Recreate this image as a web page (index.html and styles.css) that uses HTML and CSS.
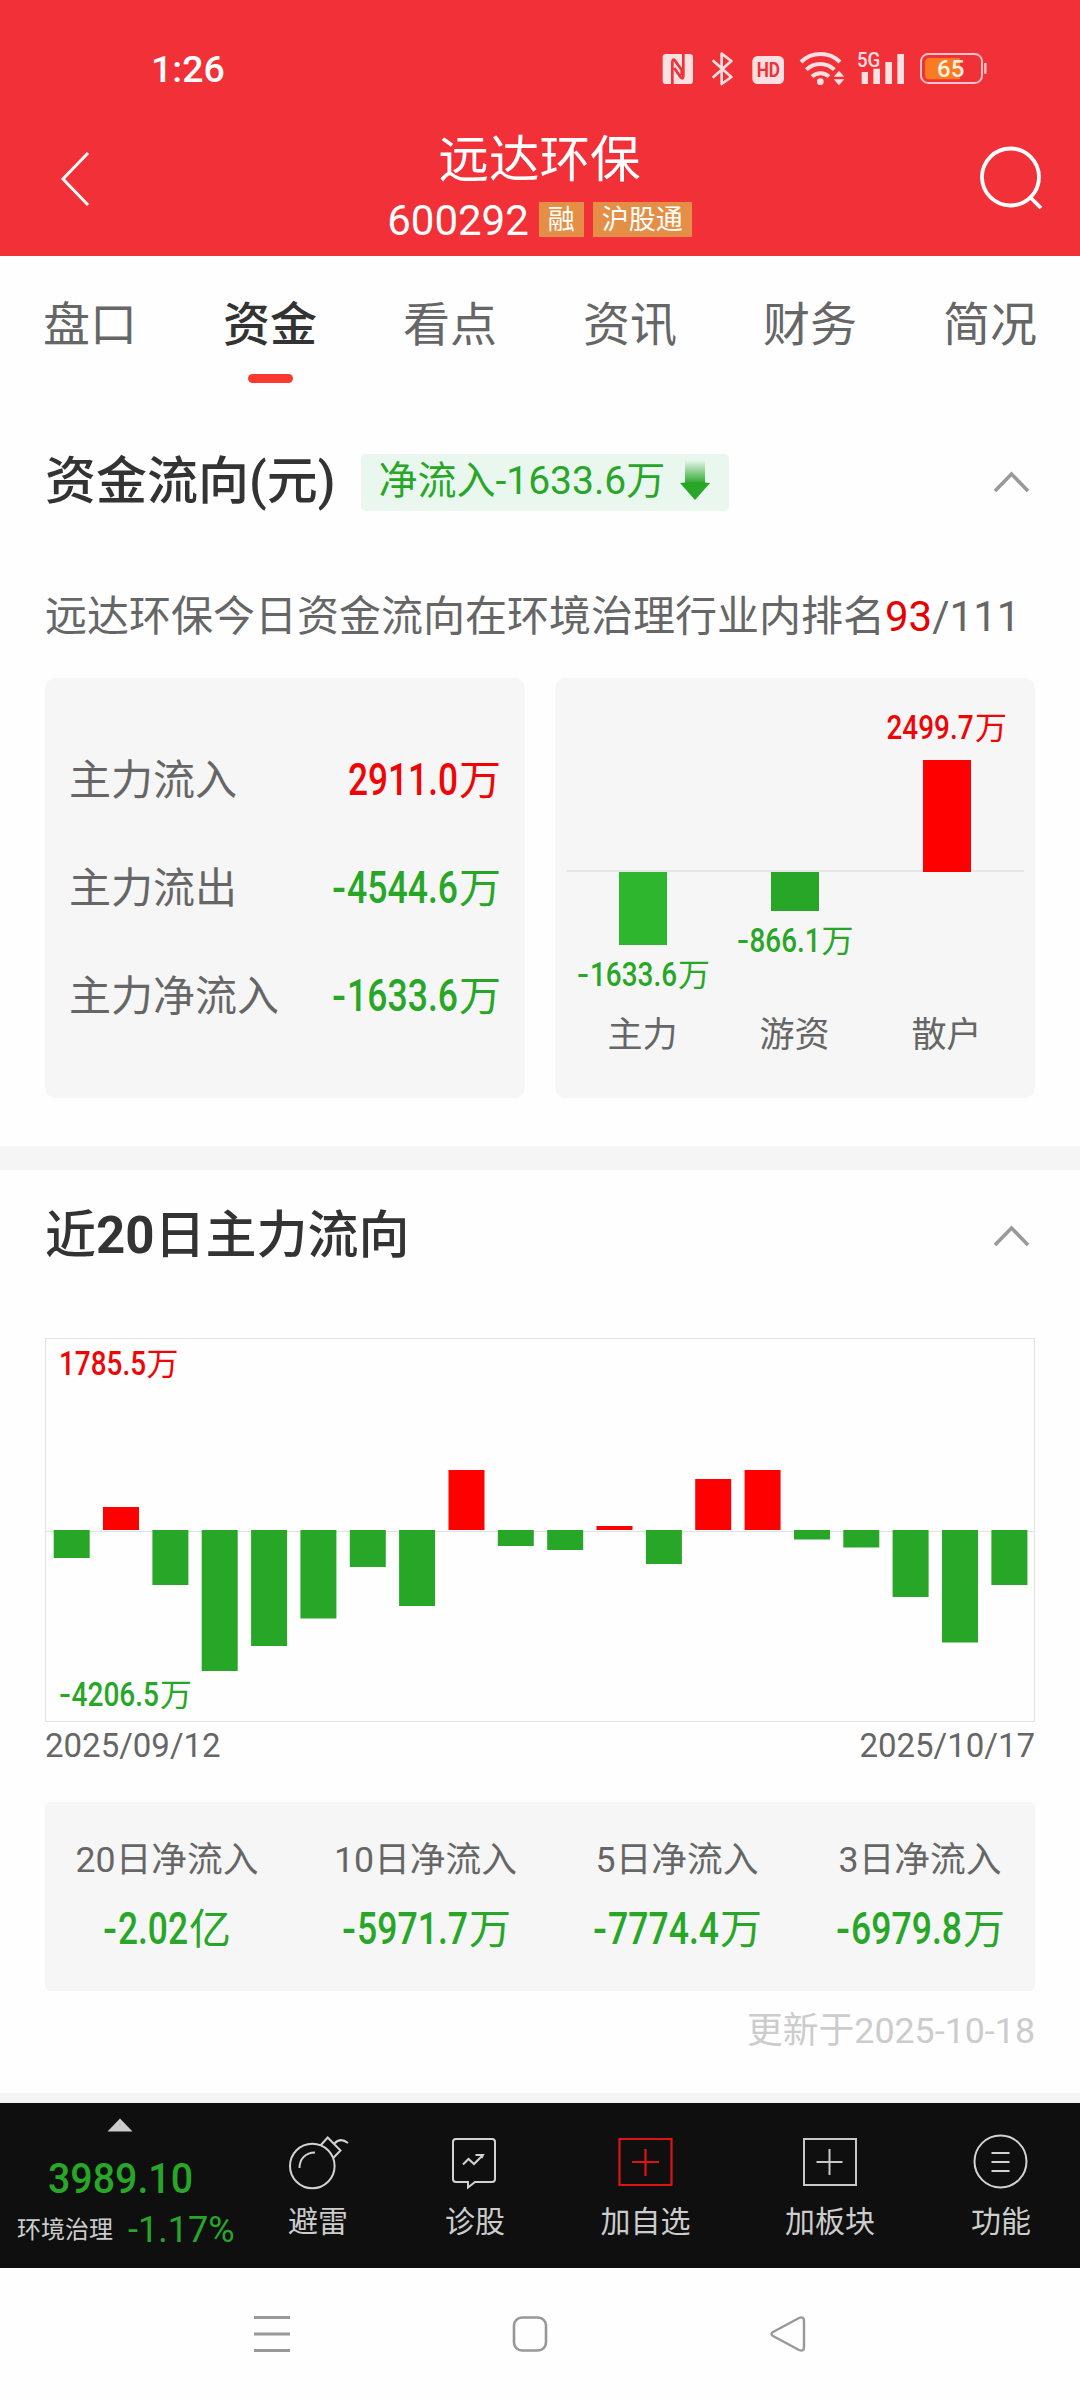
FILE: index.html
```html
<!DOCTYPE html>
<html lang="zh-CN">
<head>
<meta charset="utf-8">
<title>远达环保 600292</title>
<link rel="stylesheet" href="styles.css">
</head>
<body>
<header class="top">
  <div class="status">
    <span class="clock">1:26</span>
    <svg class="status-icons" width="400" height="80" viewBox="0 0 1200 240">
      <rect x="128" y="72" width="91" height="90" rx="10" fill="#fde0e1"/>
      <path d="M157 164V98q0-14 8-6l20 28v16M190 70v66q0 14-8 6l-19-28" fill="none" stroke="#f23038" stroke-width="8"/>
      <path d="M278 91l56 50-29 21V71l29 22-56 50" fill="none" stroke="#fde0e1" stroke-width="8" stroke-linejoin="round"/>
      <rect x="397" y="78" width="95" height="84" rx="16" fill="#fde0e1"/>
      <text class="hd" x="410" y="140" textLength="70" lengthAdjust="spacingAndGlyphs">HD</text>
      <g fill="none" stroke="#fde0e1" stroke-width="12">
        <path d="M543 96a84 84 0 0 1 117 0"/>
        <path d="M559 119a60 60 0 0 1 84 0"/>
        <path d="M576 140a36 36 0 0 1 51 0"/>
      </g>
      <circle cx="601" cy="155" r="10" fill="#fde0e1"/>
      <path d="M641 140h32l-16-18zM641 148h32l-16 18z" fill="#fde0e1"/>
      <text class="fiveg" x="711" y="112" textLength="70" lengthAdjust="spacingAndGlyphs">5G</text>
      <path d="M725 126h19v36h-19zM760 116h20v46h-20zM796 96h20v66h-20zM832 72h20v90h-20z" fill="#fde0e1"/>
      <rect x="903" y="72" width="183" height="87" rx="22" fill="none" stroke="#fbc3c6" stroke-width="6"/>
      <path d="M929 84h91v64h-91q-14 0-14-14v-36q0-14 14-14z" fill="#f97c22"/>
      <path d="M1096 99v32" stroke="#fbc3c6" stroke-width="7"/>
      <text class="battery" x="951" y="142" textLength="82" lengthAdjust="spacingAndGlyphs">65</text>
    </svg>
  </div>
  <div class="titlebar">
    <svg class="back" width="40" height="64" viewBox="0 0 40 64"><path d="M33 6L8 32l25 26" fill="none" stroke="#fff" stroke-width="3"/></svg>
    <div class="stock">
      <h1>远达环保</h1>
      <div class="code"><span class="code-num">600292</span><span class="tag">融</span><span class="tag">沪股通</span></div>
    </div>
    <svg class="search" width="70" height="70" viewBox="0 0 70 70"><g fill="none" stroke="#fff" stroke-width="3.800"><circle cx="32.500" cy="34" r="28.500"/><path d="M52 54l11 11"/></g></svg>
  </div>
</header>

<nav class="tabs">
  <span>盘口</span><span class="active">资金</span><span>看点</span><span>资讯</span><span>财务</span><span>简况</span>
</nav>

<section class="flow">
  <div class="head">
    <h2>资金流向(元)</h2>
    <span class="chip">净流入-1633.6万
      <svg width="32" height="42" viewBox="0 0 32 42">
        <defs><linearGradient id="fall" x1="0" y1="0" x2="0" y2="1"><stop offset="0" stop-color="#28a628" stop-opacity="0"/><stop offset="1" stop-color="#28a628"/></linearGradient></defs>
        <path d="M6 0h20v24H6z" fill="url(#fall)"/><path d="M1 23q15-2 30 0L16 40z" fill="#28a628"/>
      </svg>
    </span>
    <svg class="fold" width="40" height="28" viewBox="0 0 40 28"><path d="M4 23L20.500 6 37 23" fill="none" stroke="#999" stroke-width="3.600"/></svg>
  </div>
  <p class="rank">远达环保今日资金流向在环境治理行业内排名<b>93</b>/111</p>
  <div class="cards">
    <div class="card list">
      <div class="row"><span>主力流入</span>
        <svg class="value up" width="170" height="44"><text y="37.500"><tspan x="17" textLength="110" lengthAdjust="spacingAndGlyphs">2911.0</tspan><tspan class="unit" x="128">万</tspan></text></svg></div>
      <div class="row"><span>主力流出</span>
        <svg class="value down" width="170" height="44"><text y="37.500"><tspan x="1" textLength="14" lengthAdjust="spacingAndGlyphs">-</tspan><tspan x="16" textLength="111" lengthAdjust="spacingAndGlyphs">4544.6</tspan><tspan class="unit" x="128">万</tspan></text></svg></div>
      <div class="row"><span>主力净流入</span>
        <svg class="value down" width="170" height="44"><text y="37.500"><tspan x="1" textLength="14" lengthAdjust="spacingAndGlyphs">-</tspan><tspan x="16" textLength="111" lengthAdjust="spacingAndGlyphs">1633.6</tspan><tspan class="unit" x="128">万</tspan></text></svg></div>
    </div>
    <div class="card">
      <svg class="value small" width="480" height="420" viewBox="555 678 480 420">
        <path d="M566 871h458" stroke="#e2e2e2" stroke-width="1.500"/>
        <rect x="619" y="872" width="48" height="73" fill="#2eb62e"/>
        <rect x="771" y="872" width="48" height="39" fill="#28a628"/>
        <rect x="923" y="760" width="48" height="112" fill="#f00"/>
        <text class="down" y="986"><tspan x="577" textLength="12" lengthAdjust="spacingAndGlyphs">-</tspan><tspan x="590" textLength="87" lengthAdjust="spacingAndGlyphs">1633.6</tspan><tspan class="unit" x="678">万</tspan></text>
        <text class="down" y="952"><tspan x="737" textLength="12" lengthAdjust="spacingAndGlyphs">-</tspan><tspan x="749.500" textLength="71" lengthAdjust="spacingAndGlyphs">866.1</tspan><tspan class="unit" x="821.500">万</tspan></text>
        <text class="up" y="738.500"><tspan x="886.500" textLength="87" lengthAdjust="spacingAndGlyphs">2499.7</tspan><tspan class="unit" x="975">万</tspan></text>
        <g class="cat"><text x="642.500" y="1047">主力</text><text x="794.500" y="1047">游资</text><text x="946.500" y="1047">散户</text></g>
      </svg>
    </div>
  </div>
</section>

<section class="history">
  <div class="head">
    <h2>近<b>20</b>日主力流向</h2>
    <svg class="fold" width="40" height="28" viewBox="0 0 40 28"><path d="M4 23L20.500 6 37 23" fill="none" stroke="#999" stroke-width="3.600"/></svg>
  </div>
  <svg class="chart value small" width="990" height="384" viewBox="45 1338 990 384">
    <rect x="45.500" y="1338.500" width="989" height="383" fill="none" stroke="#e2e2e2"/>
    <path d="M46 1531.500h988" stroke="#e2e2e2"/>
    <path fill="#28a628" d="M53.700 1530h36v28h-36zM152.400 1530h36v55h-36zM201.700 1530h36v141h-36zM251.100 1530h36v116h-36zM300.400 1530h36v88.500h-36zM349.800 1530h36v37h-36zM399.100 1530h36v76h-36zM497.800 1530h36v16h-36zM547.200 1530h36v20h-36zM645.900 1530h36v34h-36zM794 1530h36v9.500h-36zM843.300 1530h36v17.500h-36zM892.600 1530h36v67h-36zM942 1530h36v112.500h-36zM991.400 1530h36v55h-36z"/>
    <path fill="#f00" d="M103 1507h36v23h-36zM448.500 1470h36v60h-36zM596.500 1526h36v4h-36zM695.200 1479h36v51h-36zM744.600 1470h36v60h-36z"/>
    <text class="up" y="1375"><tspan x="59" textLength="87" lengthAdjust="spacingAndGlyphs">1785.5</tspan><tspan class="unit" x="146.500">万</tspan></text>
    <text class="down" y="1706"><tspan x="59" textLength="12" lengthAdjust="spacingAndGlyphs">-</tspan><tspan x="71.500" textLength="87.500" lengthAdjust="spacingAndGlyphs">4206.5</tspan><tspan class="unit" x="160">万</tspan></text>
  </svg>
  <div class="dates"><span>2025/09/12</span><span>2025/10/17</span></div>
  <div class="summary">
    <div><span>20日净流入</span><svg class="value down" width="170" height="44"><text y="37.500"><tspan x="21" textLength="14" lengthAdjust="spacingAndGlyphs">-</tspan><tspan x="36" textLength="70" lengthAdjust="spacingAndGlyphs">2.02</tspan><tspan class="unit" x="107">亿</tspan></text></svg></div>
    <div><span>10日净流入</span><svg class="value down" width="170" height="44"><text y="37.500"><tspan x="1" textLength="14" lengthAdjust="spacingAndGlyphs">-</tspan><tspan x="16" textLength="111" lengthAdjust="spacingAndGlyphs">5971.7</tspan><tspan class="unit" x="128">万</tspan></text></svg></div>
    <div><span>5日净流入</span><svg class="value down" width="170" height="44"><text y="37.500"><tspan x="1" textLength="14" lengthAdjust="spacingAndGlyphs">-</tspan><tspan x="16" textLength="111" lengthAdjust="spacingAndGlyphs">7774.4</tspan><tspan class="unit" x="128">万</tspan></text></svg></div>
    <div><span>3日净流入</span><svg class="value down" width="170" height="44"><text y="37.500"><tspan x="1" textLength="14" lengthAdjust="spacingAndGlyphs">-</tspan><tspan x="16" textLength="111" lengthAdjust="spacingAndGlyphs">6979.8</tspan><tspan class="unit" x="128">万</tspan></text></svg></div>
  </div>
  <p class="updated">更新于2025-10-18</p>
</section>

<footer class="toolbar">
  <div class="index">
    <svg width="26" height="14" viewBox="0 0 26 14"><path d="M.5 13.500L13 .5l12.500 13z" fill="#ccc"/></svg>
    <svg class="value down" width="150" height="42"><text x="3" y="37" textLength="145" lengthAdjust="spacingAndGlyphs">3989.10</text></svg>
    <div class="change"><span>环境治理</span><em>-1.17%</em></div>
  </div>
  <div class="tool"><svg width="64" height="60" viewBox="285.500 2133 64 60"><g fill="none" stroke="#d2d2d2" stroke-width="2"><circle cx="311.800" cy="2166" r="22.300"/><path d="M320 2145.500l7.200-8 12.800 13-7.300 7.500M334 2143.500c4-4.500 9-4 13.500-.5M299 2168c0-9 6-15.500 15.500-15.500"/></g></svg><span>避雷</span></div>
  <div class="tool"><svg width="64" height="60" viewBox="443 2133 64 60"><g fill="none" stroke="#d2d2d2" stroke-width="2"><path d="M456 2139h36q3 0 3 3v37q0 3-3 3h-17l-7 5.500v-5.500h-12q-3 0-3-3v-37q0-3 3-3z"/><path d="M463 2164.500l5.500-5.500 5.500 5 9-9M475.500 2155h7.500l-1.500 3"/></g></svg><span>诊股</span></div>
  <div class="tool"><svg width="64" height="60" viewBox="614 2133 64 60"><path d="M619.500 2139h52v46h-52zM632 2162h27M645.500 2149v27" fill="none" stroke="#dc1414" stroke-width="2.200"/></svg><span>加自选</span></div>
  <div class="tool"><svg width="64" height="60" viewBox="798 2133 64 60"><path d="M804 2139h52v46h-52zM816.500 2162h26M829.500 2149v26" fill="none" stroke="#c8c8c8" stroke-width="2"/></svg><span>加板块</span></div>
  <div class="tool"><svg width="64" height="60" viewBox="969 2133 64 60"><g fill="none" stroke="#d2d2d2" stroke-width="2"><circle cx="1000.500" cy="2161.500" r="26"/><path d="M991.500 2153h18M991.500 2162h18M991.500 2171h18"/></g></svg><span>功能</span></div>
</footer>

<div class="sysnav">
  <svg width="40" height="40" viewBox="0 0 40 40"><path d="M2 3.500h36M2 20h36M2 36.500h36" stroke="#989898" stroke-width="3"/></svg>
  <svg width="40" height="40" viewBox="0 0 40 40"><rect x="4" y="3.500" width="32" height="33" rx="8" fill="none" stroke="#989898" stroke-width="2.600"/></svg>
  <svg width="40" height="40" viewBox="0 0 40 40"><path d="M5 18L31 4q5-2 5 3v26q0 5-5 3L5 22q-3-2 0-4z" fill="none" stroke="#989898" stroke-width="2.400"/></svg>
</div>
</body>
</html>
```
FILE: styles.css
```css
* { box-sizing: border-box; }
body {
  margin: 0;
  width: 1080px;
  height: 2400px;
  overflow: hidden;
  background: #fefefe;
  font-family: Roboto, "Noto Sans CJK SC", sans-serif;
  color: #666;
}
h1, h2, p { margin: 0; font-weight: 400; }
svg { display: block; flex: none; overflow: visible; }
span, p, h1, h2 { white-space: nowrap; }

.top { height: 256px; background: #f23038; color: #fff; }
.status { height: 110px; padding: 30px 60px 0 151px; display: flex; justify-content: space-between; }
.clock { font-size: 37.500px; line-height: 78px; font-weight: 500; }
.hd { font: 700 60px Roboto, sans-serif; fill: #f23038; }
.fiveg { font: 500 62px Roboto, sans-serif; fill: #fde0e1; }
.battery { font: 500 74px Roboto, sans-serif; fill: #fff0e2; }
.titlebar { height: 146px; padding: 0 32px 0 55px; display: flex; justify-content: space-between; }
.back { margin-top: 37px; }
.search { margin-top: 33px; }
.stock { margin-left: 6px; padding-top: 20px; }
.stock h1 { font-size: 50.500px; line-height: 60px; text-align: center; }
.code { display: flex; height: 36px; margin-top: 11px; align-items: center; }
.code-num { font-size: 42px; line-height: 36px; margin-right: 10px; padding-top: 3px; }
.tag { height: 35px; padding: 0 9px; background: #e48f45; font-size: 27px; line-height: 36px; }
.tag + .tag { margin-left: 9px; }

.tabs { height: 154px; display: grid; grid-template-columns: repeat(6, 180px); text-align: center; font-size: 47px; line-height: 138px; }
.tabs .active { color: #333; font-weight: 500; }
.tabs .active::after { content: ""; display: block; width: 45px; height: 9px; margin: -20px auto 0; border-radius: 5px; background: #f93a31; }

.flow { height: 760px; padding: 0 45px; border-bottom: 24px solid #f5f5f5; }
.head { display: flex; align-items: center; }
.head h2 { color: #333; font-size: 51px; font-weight: 500; line-height: 60px; }
.head h2 b { font-weight: 700; }
.fold { margin-left: auto; margin-right: 4.500px; }
.flow .head { padding-top: 43px; height: 101px; }
.chip { display: flex; align-items: center; gap: 14px; height: 57px; width: 368px; margin-left: 25px; padding: 0 0 2px 18px; border-radius: 5px; background: #eaf7ef; color: #28a628; font-size: 39px; line-height: 55px; }
.rank { padding-top: 76px; font-size: 42px; line-height: 60px; }
.rank b { font-weight: 400; color: #e60000; }
.cards { margin-top: 31px; display: grid; grid-template-columns: 480px 480px; gap: 30px; }
.card { height: 420px; border-radius: 11px; background: #f6f6f6; }
.list { padding: 47px 24px 0; }
.row { display: flex; height: 108px; align-items: center; justify-content: space-between; font-size: 42px; }
.row span { padding-bottom: 5px; }

.value { font-family: Roboto, "Noto Sans CJK SC", sans-serif; font-size: 43.500px; font-weight: 500; }
.value .unit { font-size: 42px; font-weight: 400; }
.small { font-size: 34px; }
.small .unit { font-size: 32px; }
.up { fill: #ee0505; }
.down { fill: #28a628; }
.cat { fill: #666; font-size: 35px; font-weight: 400; text-anchor: middle; }

.history { height: 933px; padding: 0 45px; border-bottom: 10px solid #f5f5f5; }
.history .head { height: 168px; padding-bottom: 37px; }
.dates { display: flex; justify-content: space-between; height: 80px; font-size: 33px; line-height: 47px; }
.summary { height: 189px; padding: 33px 0 0 36px; border-radius: 6px; background: #f6f6f6; display: grid; grid-template-columns: 258.500px 251.500px 243px 172px; }
.summary div { display: flex; flex-direction: column; align-items: center; gap: 20px; width: 172px; }
.summary span { font-size: 35.700px; line-height: 51px; }
.updated { padding-top: 13px; text-align: right; color: #ccc; font-size: 35.800px; line-height: 54px; }

.toolbar { height: 165px; background: #0f0f0f; display: grid; grid-template-columns: 239px 158px 156px 185px 184px 158px; color: #ccc; }
.index { padding-top: 15px; display: flex; flex-direction: column; align-items: center; }
.index .value { margin-top: 24px; font-size: 42px; }
.change { display: flex; align-items: center; align-self: stretch; gap: 15px; margin: 10px 0 0 17px; line-height: 44px; font-size: 24px; }
.change em { font-style: normal; font-size: 36px; color: #28a628; }
.tool { padding-top: 30px; display: flex; flex-direction: column; align-items: center; font-size: 30px; line-height: 57px; }

.sysnav { height: 132px; padding: 46px 272px 0 252px; display: flex; justify-content: space-between; }
```
